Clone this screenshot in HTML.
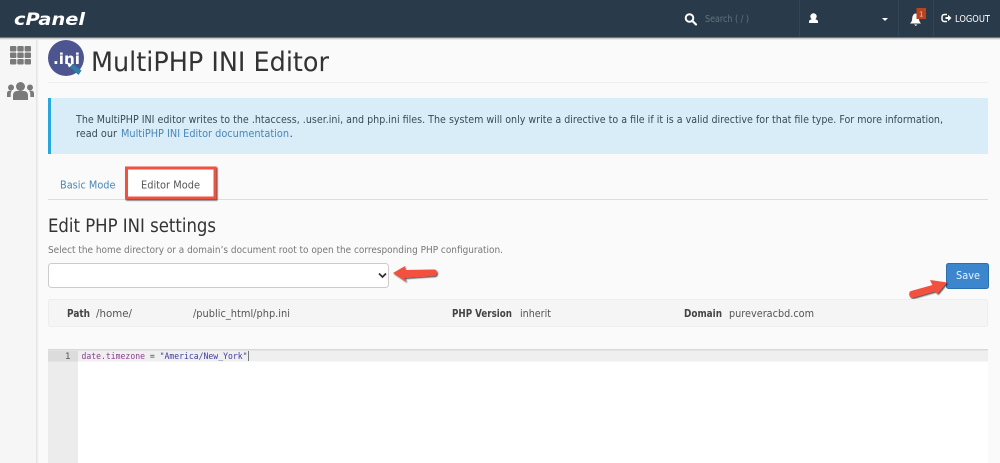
<!DOCTYPE html>
<html><head><meta charset="utf-8"><style>
html,body{margin:0;padding:0;width:1000px;height:463px;overflow:hidden;background:#fafafa}
svg{display:block}
text{font-family:"DejaVu Sans","Liberation Sans",sans-serif}
text.m{font-family:"DejaVu Sans Mono","Liberation Mono",monospace}
text.l{font-family:"Liberation Sans",sans-serif}
</style></head><body>
<svg width="1000" height="463" viewBox="0 0 1000 463" xmlns="http://www.w3.org/2000/svg">
<defs>
<filter id="sh" x="-20%" y="-20%" width="140%" height="150%"><feDropShadow dx="1" dy="1" stdDeviation="0.800" flood-color="#000" flood-opacity=".75"/></filter>
<linearGradient id="sb" x1="0" x2="1" y1="0" y2="0"><stop offset="0" stop-color="#e2e2e2"/><stop offset="1" stop-color="#fafafa"/></linearGradient>
<linearGradient id="hs" x1="0" x2="0" y1="0" y2="1"><stop offset="0" stop-color="#999"/><stop offset="1" stop-color="#fafafa"/></linearGradient>
</defs>
<rect width="1000" height="463" fill="#fafafa"/>
<!-- sidebar -->
<rect x="0" y="38" width="36" height="425" fill="#f6f6f6"/>
<rect x="36" y="38" width="3" height="425" fill="url(#sb)"/>
<g fill="#7a7a7a">
<rect x="10" y="46" width="6.400" height="5.500" rx="1"/><rect x="17.300" y="46" width="6.400" height="5.500" rx="1"/><rect x="24.600" y="46" width="6.400" height="5.500" rx="1"/>
<rect x="10" y="52.500" width="6.400" height="5.500" rx="1"/><rect x="17.300" y="52.500" width="6.400" height="5.500" rx="1"/><rect x="24.600" y="52.500" width="6.400" height="5.500" rx="1"/>
<rect x="10" y="59" width="6.400" height="5.500" rx="1"/><rect x="17.300" y="59" width="6.400" height="5.500" rx="1"/><rect x="24.600" y="59" width="6.400" height="5.500" rx="1"/>
<circle cx="20.500" cy="86.500" r="4.500"/><path d="M13 100v-4.500c0-3 2-4.500 4-4.500h7c2 0 4 1.500 4 4.500v4.500z"/>
<circle cx="11" cy="87.500" r="3"/><circle cx="30" cy="87.500" r="3"/>
<path d="M7 97v-3.500c0-2 1.200-2.800 2.500-2.800h2.500c-1 1-1.300 2.300-1.300 3.800v2.500zM34 97v-3.500c0-2-1.200-2.800-2.500-2.800h-2.500c1 1 1.300 2.300 1.300 3.800v2.500z"/>
</g>
<!-- header -->
<rect y="37" width="1000" height="3" fill="url(#hs)"/>
<rect width="1000" height="37.500" fill="#293a4a"/>
<text x="14" y="25" font-size="17" font-weight="700" font-style="italic" fill="#fff" textLength="71" lengthAdjust="spacingAndGlyphs">cPanel</text>
<path d="M799.500 0v37M898.500 0v37M933.500 0v37" stroke="#32465a" stroke-width="1"/>
<circle cx="689.500" cy="18" r="3.800" fill="none" stroke="#fff" stroke-width="2"/><path d="M692.500 21l3.500 3.500" stroke="#fff" stroke-width="2.200" stroke-linecap="round"/>
<text x="705" y="22" font-size="9.500" fill="#66737f" textLength="44" lengthAdjust="spacingAndGlyphs">Search ( / )</text>
<circle cx="813.500" cy="16.500" r="3.200" fill="#fff"/><path d="M809 23v-1.500c0-1.500 2-2 3-2.500h3c1 .5 3 1 3 2.500V23z" fill="#fff"/>
<path d="M882 18h6l-3 3z" fill="#fff"/>
<path d="M910 23.500c1.500-1.500 2.200-3 2.200-5 0-2.500 1.500-5 3.300-5s3.500 2 3.500 5c0 2 .6 3.500 2 5z" fill="#fff"/><path d="M914 24.500h3.500l-1.700 1.500z" fill="#fff"/>
<rect x="916.500" y="8" width="9.500" height="11" fill="#b8431c"/><text x="921.200" y="16.500" font-size="7" fill="#f0c9b8" text-anchor="middle">1</text>
<path d="M947 14.500h-2.500c-1.500 0-2.500 1-2.500 2.500v2c0 1.500 1 2.500 2.500 2.500H947" fill="none" stroke="#fff" stroke-width="1.500"/><path d="M945.500 17h2.500v-2.200l3.500 3.200-3.500 3.200V19h-2.500z" fill="#fff"/>
<text x="955" y="22" font-size="10" fill="#fff" textLength="35" lengthAdjust="spacingAndGlyphs">LOGOUT</text>
<!-- title -->
<circle cx="66" cy="58" r="18" fill="#4c5590"/>
<text x="53" y="64" font-size="15" font-weight="700" fill="#fff" textLength="27" lengthAdjust="spacingAndGlyphs">.ini</text>
<path d="M69.500 66.500l3-2.500 9 6.500-3 4.500z" fill="#2f7fa8"/><path d="M66.500 62l6 2.500-3.500 3z" fill="#fff"/>
<text x="91" y="71" font-size="27" fill="#333" textLength="238" lengthAdjust="spacingAndGlyphs">MultiPHP INI Editor</text>
<rect x="48" y="82" width="940" height="1" fill="#eee"/>
<!-- alert -->
<rect x="48" y="98" width="940" height="56" fill="#d9edf8"/>
<rect x="48" y="98" width="3" height="56" fill="#2aa6dc"/>
<text x="76" y="123" font-size="11" fill="#3a4a55" textLength="867" lengthAdjust="spacingAndGlyphs">The MultiPHP INI editor writes to the .htaccess, .user.ini, and php.ini files. The system will only write a directive to a file if it is a valid directive for that file type. For more information,</text>
<text x="76" y="137" font-size="11" fill="#3a4a55" textLength="41" lengthAdjust="spacingAndGlyphs">read our</text>
<text x="121" y="137" font-size="11" fill="#4a86b8" textLength="168" lengthAdjust="spacingAndGlyphs">MultiPHP INI Editor documentation</text>
<text x="289.500" y="137" font-size="11" fill="#3a4a55">.</text>
<!-- tabs -->
<text x="60" y="188.500" font-size="11" fill="#4a86b8" textLength="55.500" lengthAdjust="spacingAndGlyphs">Basic Mode</text>
<rect x="48" y="199" width="940" height="1" fill="#ddd"/>
<rect x="126.500" y="168" width="88.500" height="30" fill="#fff" stroke="#f2513f" stroke-width="3" filter="url(#sh)"/>
<text x="141" y="188.500" font-size="11" fill="#555" textLength="59" lengthAdjust="spacingAndGlyphs">Editor Mode</text>
<!-- heading -->
<text x="48" y="232" font-size="18.500" fill="#333" textLength="168" lengthAdjust="spacingAndGlyphs">Edit PHP INI settings</text>
<text x="48" y="253" font-size="9.500" fill="#777" textLength="455" lengthAdjust="spacingAndGlyphs">Select the home directory or a domain’s document root to open the corresponding PHP configuration.</text>
<!-- select -->
<rect x="48.500" y="263.500" width="340" height="24" rx="3" fill="#fff" stroke="#ccc"/>
<path d="M379 273.500l3.500 3.500 3.500-3.500" fill="none" stroke="#333" stroke-width="1.800"/>
<!-- select arrow -->
<path d="M393 273L405 266L404.500 270L434 269.500c3.500 0 4 6 .5 6.500L404.500 278L406.500 282z" fill="#f2513f" filter="url(#sh)"/>
<!-- save -->
<rect x="946.500" y="263.500" width="42" height="25" rx="2" fill="#3b86cc" stroke="#2a70b0"/>
<text x="956" y="279" font-size="11" fill="#eaf3fb" textLength="24" lengthAdjust="spacingAndGlyphs">Save</text>
<path d="M947 282.500L930 280L932.500 285L911 291c-3 1-2 7 1.500 7L935 291.500L937.500 294z" fill="#f2513f" filter="url(#sh)"/>
<!-- path bar -->
<rect x="48.500" y="299.500" width="939" height="27" rx="2" fill="#f5f5f5" stroke="#eee"/>
<text x="67" y="317" font-size="10.500" font-weight="700" fill="#444" textLength="23" lengthAdjust="spacingAndGlyphs">Path</text>
<text x="96" y="317" font-size="11" fill="#555" textLength="36" lengthAdjust="spacingAndGlyphs">/home/</text>
<text x="193" y="317" font-size="11" fill="#555" textLength="97" lengthAdjust="spacingAndGlyphs">/public_html/php.ini</text>
<text x="452" y="317" font-size="10.500" font-weight="700" fill="#444" textLength="60" lengthAdjust="spacingAndGlyphs">PHP Version</text>
<text x="520" y="317" font-size="11" fill="#555" textLength="31" lengthAdjust="spacingAndGlyphs">inherit</text>
<text x="684" y="317" font-size="10.500" font-weight="700" fill="#444" textLength="38" lengthAdjust="spacingAndGlyphs">Domain</text>
<text x="729" y="317" font-size="11" fill="#555" textLength="85" lengthAdjust="spacingAndGlyphs">pureveracbd.com</text>
<!-- editor -->
<rect x="48" y="349" width="940" height="114" fill="#fff"/>
<rect x="48" y="349" width="940" height="1.500" fill="#d8d8d8"/>
<rect x="48" y="350" width="30" height="113" fill="#ececec"/>
<rect x="78" y="350.500" width="910" height="11" fill="#efefef"/>
<rect x="48" y="350.500" width="30" height="11" fill="#dcdcdc"/>
<text x="65" y="359" font-size="9" fill="#555">1</text>
<text class="m" x="81.500" y="359" font-size="8.500" textLength="166" lengthAdjust="spacingAndGlyphs"><tspan fill="#8a3f8f">date.timezone</tspan><tspan fill="#444"> = </tspan><tspan fill="#3a3f9a">"America/New_York"</tspan></text>
<rect x="248" y="351" width="1" height="10" fill="#777"/>
</svg>
</body></html>
